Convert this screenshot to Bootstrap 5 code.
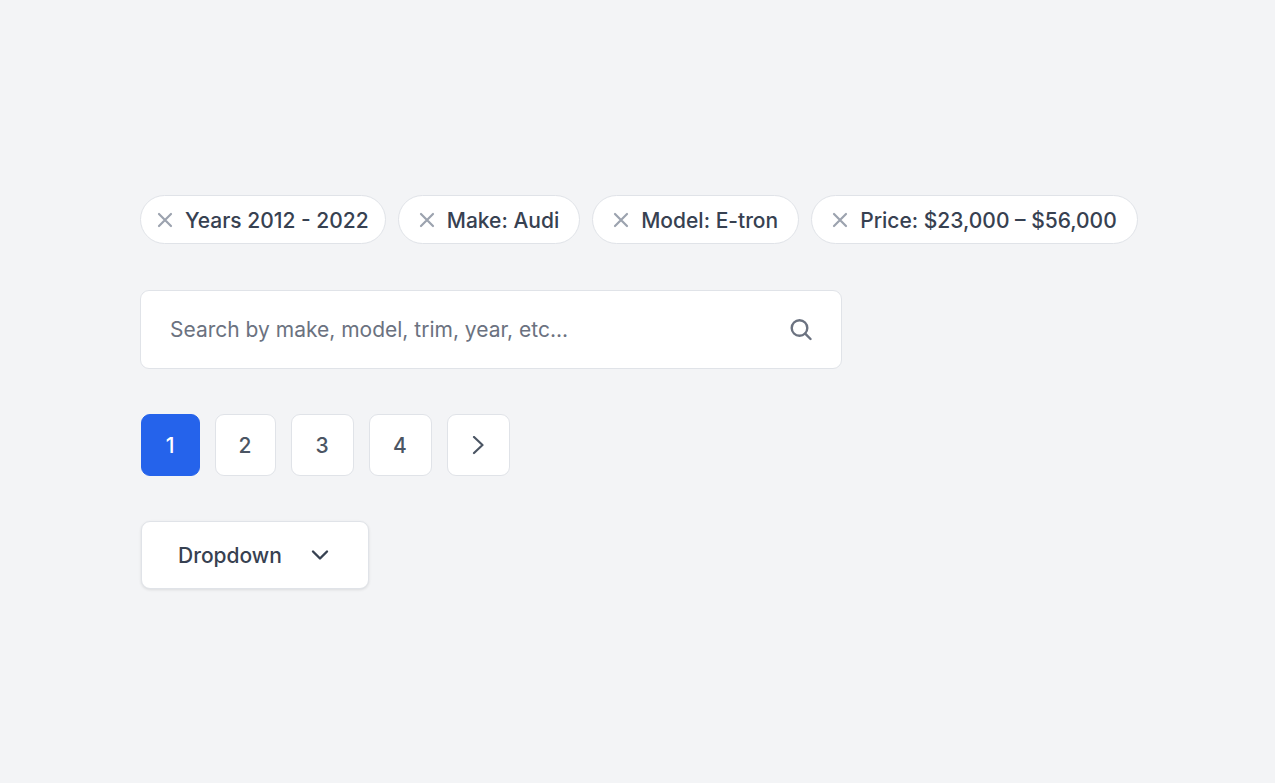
<!DOCTYPE html>
<html lang="en">
<head>
<meta charset="utf-8">
<meta name="viewport" content="width=device-width, initial-scale=1">
<title>Car search filters</title>
<link href="https://cdn.jsdelivr.net/npm/bootstrap@5.3.0/dist/css/bootstrap.min.css" rel="stylesheet">
<style>
body { background: #f3f4f6; font-family: Inter, "Liberation Sans", sans-serif; font-size: 21px; line-height: 32px; font-weight: 500; color: #374151; }
.filters { padding: 195px 120px 40px 140px; gap: 45px; }
.chips { gap: 12px; padding-bottom: 1px; }
.chip { height: 49px; font-size: 21px; line-height: 32px; font-weight: 500; color: #374151; background: #fff; border: 1px solid #e0e3e8; border-radius: 25px; padding: 0 20px; gap: 12px; white-space: nowrap; }
.chip-tight { padding: 0 16px; }
.chip span { padding-top: 2px; }
.chip svg { color: #9ca3af; }
.search-box { max-width: 702px; height: 79px; background: #fff; border: 1px solid #e0e3e8; border-radius: 9px; padding: 0 29px; }
.search-box input, .search-box input:focus { font-size: 21px; line-height: 32px; color: #374151; background: none; border: 0; box-shadow: none; padding: 1px 0 0; }
.search-box input::placeholder { color: #6b7280; opacity: 1; }
.search-box button { color: #6b7280; line-height: 0; }
.pager { gap: 15px; padding-left: 1px; }
.pager .page-item .page-link { width: 63px; height: 62px; padding: 2px 1px 0 0; font-size: 21px; color: #4b5563; background: #fff; border: 1px solid #e0e3e8; border-radius: 9px; margin: 0; }
.pager .page-item.active .page-link { width: 59px; background: #2563eb; border-color: #2563eb; color: #fff; }
.pager .page-item.narrow .page-link { width: 61px; }
.menu-toggle { font-size: 21px; line-height: 32px; font-weight: 500; color: #374151; background: #fff; border: 1px solid #e0e3e8; border-radius: 9px; width: 228px; height: 68px; padding: 0 36px; gap: 29px; margin-left: 1px; box-shadow: 0 1px 3px rgba(0,0,0,.1); }
.menu-toggle span { padding-top: 2px; }
</style>
</head>
<body>
<main class="filters d-flex flex-column">
  <div class="chips d-flex flex-wrap">
    <button type="button" class="chip chip-tight d-flex align-items-center"><svg width="16" height="16" viewBox="0 0 16 16" fill="none" stroke="currentColor" stroke-width="2.2" stroke-linecap="round"><path d="M2 2l12 12M14 2L2 14"/></svg><span>Years 2012 - 2022</span></button>
    <button type="button" class="chip d-flex align-items-center"><svg width="16" height="16" viewBox="0 0 16 16" fill="none" stroke="currentColor" stroke-width="2.2" stroke-linecap="round"><path d="M2 2l12 12M14 2L2 14"/></svg><span>Make: Audi</span></button>
    <button type="button" class="chip d-flex align-items-center"><svg width="16" height="16" viewBox="0 0 16 16" fill="none" stroke="currentColor" stroke-width="2.2" stroke-linecap="round"><path d="M2 2l12 12M14 2L2 14"/></svg><span>Model: E-tron</span></button>
    <button type="button" class="chip d-flex align-items-center"><svg width="16" height="16" viewBox="0 0 16 16" fill="none" stroke="currentColor" stroke-width="2.2" stroke-linecap="round"><path d="M2 2l12 12M14 2L2 14"/></svg><span>Price: $23,000 – $56,000</span></button>
  </div>
  <form class="search-box d-flex align-items-center">
    <input type="search" class="form-control" placeholder="Search by make, model, trim, year, etc..." aria-label="Search cars">
    <button type="submit" class="btn p-0 border-0" aria-label="Search"><svg width="22" height="22" viewBox="0 0 22 22" fill="none" stroke="currentColor" stroke-width="2.4" stroke-linecap="round"><circle cx="9.5" cy="9" r="7.8"/><path d="M15.2 14.7l5.3 5.3"/></svg></button>
  </form>
  <nav aria-label="Result pages">
    <ul class="pager pagination m-0">
      <li class="page-item active"><a class="page-link d-flex align-items-center justify-content-center" href="#" aria-current="page">1</a></li>
      <li class="page-item narrow"><a class="page-link d-flex align-items-center justify-content-center" href="#">2</a></li>
      <li class="page-item"><a class="page-link d-flex align-items-center justify-content-center" href="#">3</a></li>
      <li class="page-item"><a class="page-link d-flex align-items-center justify-content-center" href="#">4</a></li>
      <li class="page-item"><a class="page-link d-flex align-items-center justify-content-center" href="#" aria-label="Next page"><svg width="12" height="20" viewBox="0 0 12 20" fill="none" stroke="currentColor" stroke-width="2.2" stroke-linecap="round" stroke-linejoin="round"><path d="M2 1l8.5 8L2 17"/></svg></a></li>
    </ul>
  </nav>
  <button type="button" class="menu-toggle d-flex align-items-center" aria-haspopup="true"><span>Dropdown</span><svg width="18" height="12" viewBox="0 0 18 12" fill="none" stroke="currentColor" stroke-width="2.4" stroke-linecap="round" stroke-linejoin="round"><path d="M2 2.5l7 7 7-7"/></svg></button>
</main>
<script src="https://cdn.jsdelivr.net/npm/bootstrap@5.3.0/dist/js/bootstrap.bundle.min.js"></script>
</body>
</html>
